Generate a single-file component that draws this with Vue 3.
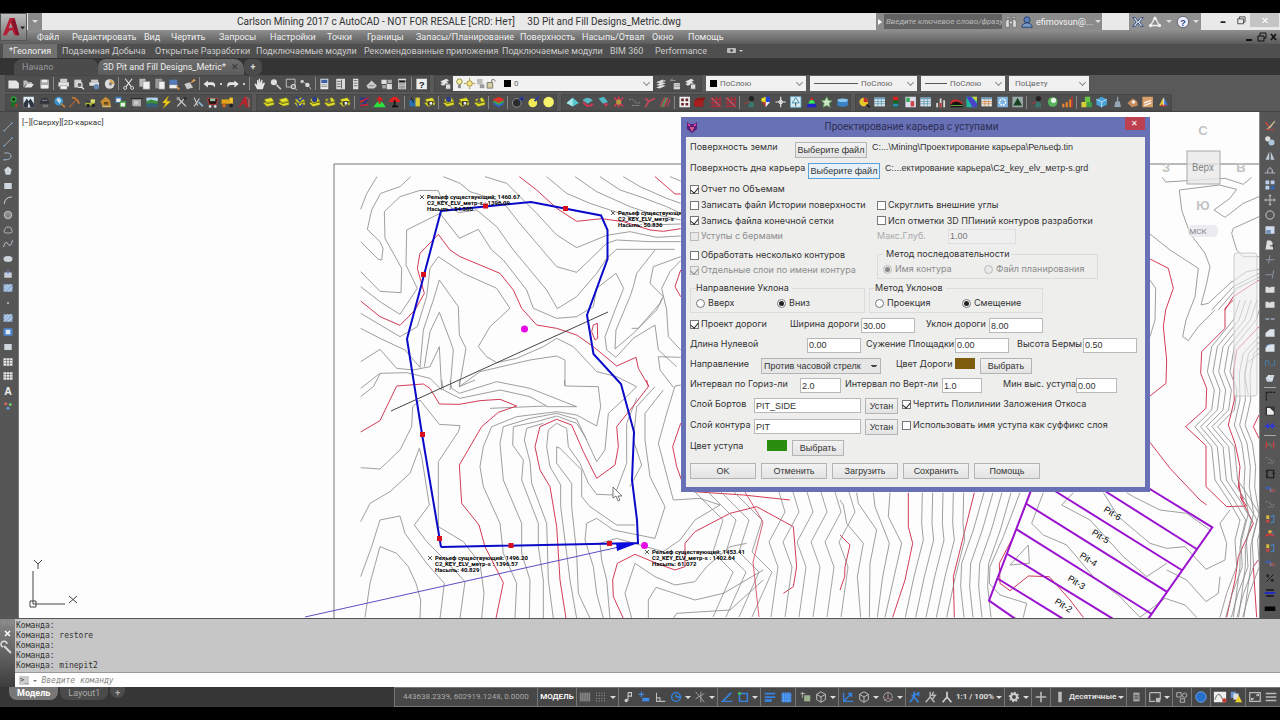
<script setup>
import { ref } from 'vue'

const menus = ['Файл', 'Редактировать', 'Вид', 'Чертить', 'Запросы', 'Настройки', 'Точки', 'Границы', 'Запасы/Планирование', 'Поверхность', 'Насыпь/Отвал', 'Окно', 'Помощь']
const ribbon = ['*Геология', 'Подземная Добыча', 'Открытые Разработки', 'Подключаемые модули', 'Рекомендованные приложения', 'Подключаемые модули', 'BIM 360', 'Performance']

const W = '#e4e4e4'
const layer = (extra) => `<path d="M3 5l8-2 3 4-8 2zM2 9l4-1 8 0 0 3-8 2z" fill="#e6e12c" stroke="#8b8a1c" stroke-width=".6"/><path d="M3 7l3 3 8-2" fill="none" stroke="#6b6b12"/>${extra}`
const table = (c) => `<path d="M2 3h12v10H2z" fill="#dfe9ef"/><path d="M2 3h12v2H2z" fill="#6aa0c4"/><path d="M2 7.500h12M2 10h12M6 5v8M10 5v8" stroke="${c}" stroke-width=".8"/>`
const person = (c) => `<circle cx="10" cy="4" r="3" fill="#222"/><path d="M6 14l2-7 5 2v5z" fill="${c}"/><path d="M2 10l5-2" stroke="#b33" />`
const hash = `<path d="M5 2v12M9 2v12M13 2v12M2 5h12M2 9h12M2 13h12" stroke="#b62b3c" stroke-width="1.200" fill="none"/><path d="M3 3l10 10" stroke="#c9868e"/>`

const icons = {
  new: `<path d="M2 4h9l3 3v6H2z" fill="${W}"/>`,
  open: `<path d="M2 12V4h4l1 2h5v2H5z" fill="#bbb"/><path d="M3 12l3-4h8l-3 4z" fill="${W}"/>`,
  save: `<path d="M3 3h10v10H3z" fill="#aaa"/><path d="M5 3h6v3H5zM4 9h8v4H4z" fill="#eee"/>`,
  print: `<path d="M4 2h8v4H4z" fill="#ccc"/><path d="M2 6h12v5H2z" fill="${W}"/><path d="M4 10h8v4H4z" fill="#f5f5f5" stroke="#777" stroke-width=".6"/>`,
  preview: `<path d="M3 3h8v9H3z" fill="#ccc"/><circle cx="9" cy="9" r="3" fill="#666" stroke="#eee" stroke-width="1.200"/><path d="M11 11l3 3" stroke="#eee" stroke-width="1.500"/>`,
  plot: `<path d="M4 3h8v3H4z" fill="#ccc"/><path d="M2 6h11v4H2z" fill="${W}"/><circle cx="10" cy="11" r="3" fill="#6888b5"/>`,
  web: `<circle cx="8" cy="8" r="5.500" fill="#ddd"/><path d="M8 3a5 5 0 0 1 5 5H8z" fill="#e0a84c"/><circle cx="9" cy="8" r="2" fill="#888"/>`,
  cut: `<path d="M4 2l7 9M12 2l-7 9" stroke="${W}" stroke-width="1.300"/><circle cx="4" cy="12.500" r="1.700" fill="none" stroke="${W}"/><circle cx="12" cy="12.500" r="1.700" fill="none" stroke="${W}"/>`,
  copy: `<path d="M2 2h7v9H2z" fill="#bbb"/><path d="M6 5h8v9H6z" fill="#eee" stroke="#777" stroke-width=".6"/>`,
  paste: `<path d="M3 2h8v11H3z" fill="#999"/><path d="M7 5h7v9H7z" fill="#eee" stroke="#666" stroke-width=".6"/>`,
  props: `<path d="M2 2h9v12H2z" fill="#eee"/><path d="M3 3h7v4H3z" fill="#3a61a8"/><path d="M3 9h7M3 11h7" stroke="#888"/>`,
  match: `<path d="M2 3h9v6H2z" fill="#567bbb"/><path d="M2 9h9v4H2z" fill="#eee"/><path d="M9 9l5 4-2 2z" fill="#d9954a"/>`,
  block: `<path d="M2 8l6-2 4 6-7 2z" fill="#ccc"/><path d="M8 8l5-6 2 2z" fill="#e4a25a"/>`,
  undo: `<path d="M1 8l5-4v2h6q3 1 2 6-1-3-4-3H6v3z" fill="${W}"/>`,
  redo: `<path d="M15 8l-5-4v2H4q-3 1-2 6 1-3 4-3h4v3z" fill="${W}"/>`,
  hand: `<path d="M5 14L2 8l1.500-.5L5 9V3.500h1.300L7 7V2h1.400L9 7l1-4 1.300.3L11 8l2-2 1 1-2.500 7z" fill="${W}"/>`,
  zoom: `<circle cx="6" cy="6" r="3.500" fill="#ddd"/><path d="M9 9l5 5" stroke="#ccc" stroke-width="2"/>`,
  zoomw: `<path d="M3 2.500h10v9H3z" fill="none" stroke="#ccc"/><circle cx="11" cy="11" r="2.500" fill="#777" stroke="#fff"/><path d="M13 13l2 2" stroke="#fff"/>`,
  zoomp: `<circle cx="4" cy="5" r="2" fill="#ccc"/><path d="M6 6l4 3" stroke="#aaa"/><circle cx="10" cy="9" r="2.500" fill="#ddd"/><path d="M12 11l2 3" stroke="#ccc"/>`,
  palette: `<path d="M3 2h10v12H3z" fill="#ddd"/><path d="M4 5h4M4 8h4M4 11h4M9 3v10" stroke="#555"/>`,
  tools: `<path d="M5 2h6v12H5z" fill="#ddd"/><path d="M6 4h4M6 7h4M6 10h4" stroke="#666"/>`,
  sheet: `<path d="M2 10l6-6 6 6-3 3H4z" fill="#ccc"/><path d="M5 10h6" stroke="#777"/>`,
  markup: `<path d="M2 3h6v5H2zM8 8h6v6H8z" fill="#ddd"/><path d="M9 3h5v4H9zM3 9h4v4H3z" fill="#aaa"/>`,
  calc: `<path d="M4 2h9v12H4z" fill="#ddd"/><path d="M5 4h7v2H5zM5 8h7M5 10.500h7M5 12.500h7" stroke="#666"/>`,
  help: `<path d="M2 2h12v12H2z" fill="#eee"/><text x="8" y="12.500" text-anchor="middle" font-size="11" font-weight="bold" font-family="Liberation Sans" fill="#222">?</text>`,
  layers: `<path d="M2 5l7-3 3 2-7 3zM2 8l7-3 3 2-7 3z" fill="${W}"/><path d="M8 8h6v6H8z" fill="#ddd" stroke="#555"/>`,
  layers2: `<path d="M3 6l7-3 4 1-7 3zM3 9l7-3 4 1-7 3zM3 12l7-3 4 1-7 3z" fill="${W}"/><path d="M10 3l4 3" stroke="#8aa7cc"/>`,
  layers3: `<path d="M6 7h7v7H6z" fill="#ddd"/><path d="M2 4h6M2 4l3-2M6 9h7M6 11h7" stroke="#999"/>`,
  lamp: `<circle cx="8" cy="5" r="3.500" fill="#2c9a35"/><circle cx="8" cy="5" r="1.500" fill="#111"/><path d="M6 8h4l2 6h-3l-1-3-1 3H4z" fill="#1f6b27"/><circle cx="11" cy="12" r="1.500" fill="#c33"/>`,
  mount: `<path d="M2 2h12v12H2z" fill="#dfe9f2"/><path d="M2 10l4-6 2 3 2-3 4 6v4H2z" fill="#2b3540"/><path d="M7 14l1-6 2 6z" fill="#eee"/>`,
  helmet: `<path d="M3 8a5 5 0 0 1 10 0l1 2H2z" fill="#30343a"/><path d="M6 11h6v3H6z" fill="#777"/><path d="M5 6h6" stroke="#99a"/>`,
  globe: `<circle cx="7" cy="7" r="5" fill="#3d91c9"/><path d="M4 5l3-2 3 3-2 4z" fill="#bfe0f2"/><path d="M10 10l4 4" stroke="#c88a3a" stroke-width="2"/>`,
  pick: `<path d="M5 3q6 0 8 7" stroke="#d07a35" stroke-width="1.800" fill="none"/><path d="M10 5L2 14" stroke="#a55f35" stroke-width="1.500"/>`,
  loader: `<path d="M2 9h10v3H2z" fill="#b2b436"/><path d="M8 5h5v4H8z" fill="#d8dc68"/><circle cx="5" cy="12" r="2" fill="#222"/><circle cx="11" cy="12" r="2" fill="#222"/><path d="M2 6l5 2" stroke="#333"/>`,
  digger: `<path d="M2 7l6-5 5 4 1 6H4z" fill="#c88b35"/><path d="M6 8h5v3H6z" fill="#6b4b20"/><path d="M4 13h10" stroke="#ddb566" stroke-width="2"/>`,
  windows: `<path d="M2 2h7v7H2z" fill="#3e78b5"/><path d="M3 4h5v4H3z" fill="#eee"/><path d="M7 7h7v7H7z" fill="#46a343"/><path d="M8 9h5v4H8z" fill="#eee"/>`,
  box: `<path d="M3 5h10v8H3z" fill="#aaa"/><path d="M1 4h14M4 13l-2 2" stroke="#222"/><path d="M5 7h5v4H5z" fill="#ccc"/>`,
  land: `<path d="M2 3h13v4H2z" fill="#b9d5ee"/><path d="M2 7l5-2 8 2v3H2z" fill="#3b8e3c"/><path d="M2 10l6-1 7 2v3H2z" fill="#34607a"/>`,
  bolt: `<path d="M10 1L3 9h4l-3 6 9-8H8z" fill="#f4d21d" stroke="#a78a12" stroke-width=".5"/>`,
  cross: `<path d="M3 13L12 3M4 4l9 9" stroke="#ccc" stroke-width="1.500"/><circle cx="12" cy="4" r="2" fill="#333"/><circle cx="4" cy="4" r="2" fill="#999"/>`,
  hammer: `<path d="M4 3l4 9M10 4l-6 9" stroke="#ccc" stroke-width="1.300"/><path d="M9 8l5 5" stroke="#8bb5d4" stroke-width="2"/>`,
  cart: `<path d="M2 4h12l-2 7H4z" fill="#2b1515" stroke="#c33c3c"/><path d="M5 4h6v3H5z" fill="#93c4a2"/><circle cx="5" cy="13" r="1.500" fill="#ddd"/><circle cx="11" cy="13" r="1.500" fill="#ddd"/>`,
  truck: `<path d="M1 5h9v5H1z" fill="#e2a51a"/><path d="M10 3h4v7h-4z" fill="#f4c327"/><circle cx="4" cy="12" r="2.200" fill="#c7671c"/><circle cx="12" cy="12" r="2.200" fill="#222"/>`,
  redA: `<path d="M2 14L9 2l2 0 2 12h-3l-1-4H6l-2 4z" fill="#b9242c"/><path d="M11 2l3 3v9" stroke="#e27777" fill="none"/>`,
  lay1: layer(''),
  lay2: layer('<path d="M3 11l5 2" stroke="#333"/>'),
  lay3: layer('<path d="M4 2l4 5 5-4M5 9l3 5 4-4" stroke="#2d3f9b" stroke-width="1.800" fill="none"/>'),
  lay4: layer('<circle cx="8" cy="5" r="3" fill="#2f3d86"/>'),
  lay5: layer('<path d="M8 2l-4 6 6 1z" fill="#555"/>'),
  lay6: layer('<path d="M6 7h6v5H6z" fill="#333"/><path d="M8 8h3v3H8z" fill="#eee"/>'),
  arrows: `<path d="M2 4h10l-8 9" stroke="#24308f" stroke-width="2" fill="none"/><path d="M3 8l10-5M3 12l9-1" stroke="#c23" stroke-width="1.800"/>`,
  domeg: `<path d="M8 1l4 5H4z" fill="#d22"/><path d="M1 14q7-14 14 0z" fill="#2ee03e"/><path d="M8 4v6" stroke="#c22" stroke-width="2"/>`,
  domer: `<path d="M1 8q7-12 14 0z" fill="#e32222"/><path d="M8 6v7M5 13h7" stroke="#111" stroke-width="2"/>`,
  mixed: `<path d="M2 6h7v7H2z" fill="#2a6fb0"/><path d="M9 3h5v10H9z" fill="#d8cc3b"/><path d="M4 3l3 6" stroke="#111"/>`,
  stack: `<path d="M1 10l7-3 7 3-7 4z" fill="#3163c4"/><path d="M1 7.500l7-3 7 3-7 4z" fill="#3fae44"/><path d="M1 5l7-3 7 3-7 4z" fill="#d8342c"/>`,
  ballD: `<circle cx="7" cy="9" r="5" fill="#2b2b2b" stroke="#999"/><path d="M9 7l5-5M10 3h4v4" stroke="#2a3ba0" stroke-width="1.500"/>`,
  ballY: `<circle cx="7" cy="9" r="5" fill="#f1ec55"/><path d="M9 7l5-5" stroke="#2a3ba0" stroke-width="2"/>`,
  ballB: `<circle cx="8" cy="8" r="6" fill="#f7f36b"/>`,
  diamond: `<path d="M1 9l7-6 7 6-7 4z" fill="#54c7cf"/><path d="M1 9l7-6v10z" fill="#a8e5e8"/>`,
  pinkA: `<path d="M2 6q6-6 12 0l-6 4z" fill="#5ab9c5"/><path d="M3 8q5 8 11 2" fill="none" stroke="#c73756" stroke-width="2.500"/>`,
  pinkB: `<path d="M2 4l6-2 5 6-6 2z" fill="#54b8c4"/><path d="M8 9l6 1-4 4z" fill="#c93b5b"/>`,
  pinkC: `<path d="M3 3l10 10M13 3L3 13M8 2v12" stroke="#cd3a55" stroke-width="2"/><circle cx="8" cy="8" r="3" fill="#b8983c"/>`,
  dots: `<path d="M2 5h4M7 7h2M9 9h5M5 12h9" stroke="#999" stroke-dasharray="2 1"/>`,
  branch: `<path d="M3 14l4-7 7-3M7 7L3 4" stroke="#c4465a" stroke-width="2" fill="none"/>`,
  stripes: `<path d="M3 13L8 3M7 14l5-11M11 13l3-8" stroke="#b84a55" stroke-width="1.500"/><path d="M5 14l5-11" stroke="#4fa85c" stroke-width="1.500"/>`,
  pane: `<path d="M2 2h12v12H2z" fill="#eee"/><path d="M4 4h3v3H4zM9 4h3v3H9zM4 9h3v3H4zM9 9h3v3H9z" fill="#6b2222"/>`,
  cube: `<path d="M2 6l4-3h9l-3 4v6H2z" fill="#8c1717"/><path d="M2 6h10v7H2z" fill="#a91f1f"/>`,
  hash,
  person: person('#39776c'),
  shield: `<path d="M8 2h5v6H8z" fill="#2347d8"/><path d="M3 4l5-2v7L3 7z" fill="#e9e025"/><path d="M8 14L4 8h4z" fill="#d52b2b"/><path d="M8 8h5l-5 6z" fill="#eee"/>`,
  plus: `<path d="M8 2v12M2 8h12" stroke="#ddd" stroke-width="1.400"/><circle cx="8" cy="8" r="2" fill="none" stroke="#fff"/>`,
  tree: `<path d="M2 2h12v12H2z" fill="#dcecf2" stroke="#6db5cf"/><path d="M8 3l4 6H4z" fill="none" stroke="#2e89a9"/><path d="M8 9v4" stroke="#333"/>`,
  rainbow: `<path d="M8 2l2 4H6z" fill="#d22"/><path d="M6 6h4l2 4H4z" fill="#3e5"/><path d="M4 10h8l2 4H2z" fill="#22c"/>`,
  star: `<path d="M8 2l2 4 4 .5-3 3 1 4.500-4-2-4 2 1-4.500-3-3L6 6z" fill="#cfe5c8" stroke="#5c9a56"/>`,
  drum: `<path d="M2 6q6-4 12 0v6q-6 3-12 0z" fill="#3a82c8"/><ellipse cx="8" cy="6" rx="6" ry="2" fill="#8cc3ec"/>`,
  pie: `<circle cx="7" cy="8" r="5" fill="#e8c52c"/><path d="M7 8V3a5 5 0 0 1 5 5z" fill="#c92a2a"/><path d="M10 11l4 3" stroke="#222" stroke-width="2"/>`,
  table: table('#4f90a8'),
  traffic: `<path d="M5 2h6v12H5z" fill="#162"/><path d="M5 2h6v4H5z" fill="#d22"/><path d="M5 10h6v3H5z" fill="#38b"/>`,
  report: `<path d="M2 2h12v12H2z" fill="#dde"/><path d="M3 3h4v5H3z" fill="#3a5"/><path d="M8 7h4v6H8z" fill="#c44"/>`,
  bars: `<path d="M4 14V9M8 14V4M12 14V6" stroke="#ddd" stroke-width="2"/><path d="M8 14V9" stroke="#c33" stroke-width="2"/>`,
  hills: `<path d="M1 8q5-7 14 1v2H1z" fill="#cf2b2b"/><path d="M1 11q6-7 14 0v3H1z" fill="#151515"/><path d="M1 12h14" stroke="#6b4"/>`,
  heat: `<path d="M2 2h12v12H2z" fill="#23b7a0"/><path d="M2 2h6l6 8v4H9z" fill="#4a43c9"/><path d="M8 2h6v5z" fill="#d6d33a"/>`,
  tableo: table('#d27c2a'),
  gearb: `<path d="M2 2h12v12H2z" fill="#7fb4e0"/><circle cx="8" cy="8" r="3.500" fill="none" stroke="#fff" stroke-width="1.500" stroke-dasharray="2 1"/>`,
  peak: `<path d="M2 2h12v12H2z" fill="#9aa"/><path d="M8 3l5 9H3z" fill="#17401d"/>`,
  clock: `<circle cx="8" cy="8" r="5.500" fill="#57b35b"/><circle cx="9" cy="6" r="3" fill="#e7f3e7"/>`,
  chart: `<path d="M3 14v-4M7 14V8M11 14V5" stroke="#e9822c" stroke-width="2.500"/><path d="M13 14V2" stroke="#c33" stroke-width="1.500"/>`,
  cubes: `<path d="M6 2h6v6H6z" fill="#69c545"/><path d="M2 8h6v6H2z" fill="#d5cf3c"/><path d="M8 8h6v6H8z" fill="#3e9e46"/>`,
  gem: `<path d="M8 2l6 3v6l-6 3-6-3V5z" fill="#4aa3d8"/><path d="M2 5l6 3 6-3M8 8v6" stroke="#cfeaf8" fill="none"/>`,
  flask: `<path d="M8 2v6M6 8h4l1 5H5z" stroke="#9ab" stroke-width="1.300" fill="#99a7b5"/>`,
  blob: `<path d="M2 9l6-5 5 3 1 5-7 2z" fill="#c98b5b"/><circle cx="9" cy="8" r="2" fill="#eee"/>`,
  tile: `<path d="M2 2h12v12H2z" fill="#dba06a"/><path d="M4 9l8-3M4 12l8-3" stroke="#fff" stroke-width="1.500"/>`,
  fan: `<path d="M8 2L3 12h5z" fill="#e8c52c"/><path d="M8 2l5 10H8z" fill="#3b7dd0"/><path d="M5 12h6" stroke="#c33" stroke-width="2"/><path d="M8 4v8" stroke="#eee"/>`,

  line: `<path d="M3 13L13 3" stroke="#bbb"/><path d="M2 12h2v2H2zM12 2h2v2h-2z" fill="#7fa8d8"/>`,
  pline: `<path d="M3 4q9-1 9 4t-8 5" stroke="#bcd" fill="none"/><path d="M2 12h3v2H2z" fill="#7fa8d8"/>`,
  poly: `<path d="M8 2l5 4-2 7H5L3 6z" fill="#cfd6df"/>`,
  rect: `<path d="M3 4h10v8H3z" fill="#cfd6df"/>`,
  arc: `<path d="M3 13Q4 4 13 4" stroke="#ccd6e2" fill="none" stroke-width="1.300"/>`,
  circle: `<circle cx="8" cy="8" r="5" fill="#888" stroke="#ddd"/>`,
  cloud: `<path d="M4 12q-3-3 0-5 1-4 5-3 4 0 4 4 2 4-3 4z" fill="none" stroke="#ccd"/>`,
  spline: `<path d="M2 12q3-10 6-4t6-5" fill="none" stroke="#ccd" stroke-width="1.200"/>`,
  ellipse: `<ellipse cx="8" cy="8" rx="6" ry="4" fill="#ccd3dc"/>`,
  insert: `<path d="M3 6h10v7H3z" fill="#ccd"/><path d="M8 2v6M5 5l3 3 3-3" stroke="#6ea0de" fill="none"/>`,
  hatch: `<path d="M2 3h12v10H2z" fill="#8fb0d8"/><path d="M3 12l9-9M3 8l5-5M8 13l6-6" stroke="#eee"/>`,
  grad: `<path d="M2 3h12v10H2z" fill="#4e86cf"/><path d="M5 5h6v6H5z" fill="#e0eaf8"/>`,
  grid: `<path d="M2 3h12v10H2z" fill="#e8e8e8"/><path d="M2 6h12M6 3v10M10 3v10M2 9.500h12" stroke="#777"/>`,
  textA: `<text x="8" y="13.500" text-anchor="middle" font-size="14" font-weight="bold" font-family="Liberation Sans" fill="#eee">A</text>`,
  point: `<path d="M7 7h2v2H7z" fill="#eee"/>`,
  colors: `<circle cx="5" cy="5" r="2" fill="#d66"/><circle cx="11" cy="6" r="2" fill="#6c6"/><circle cx="8" cy="11" r="2" fill="#69d"/>`,
  brush: `<path d="M2 3l5 6" stroke="#c54a3a" stroke-width="2"/><path d="M14 1L7 9l-4 3 5-1 7-9z" fill="#d9c89a"/><path d="M2 13h12" stroke="#d44"/>`,
  copies: `<circle cx="5" cy="5" r="3.500" fill="#ddd"/><circle cx="10" cy="10" r="4" fill="#adc6dc"/>`,
  mirror: `<path d="M7 2v11H2zM9 2v11h5z" fill="#bcc8d4"/>`,
  offset: `<path d="M1 12h4V8q3-6 6 0v4h4" fill="none" stroke="#bbc" stroke-width="1.300"/><path d="M5 12h6V9" stroke="#bbc" fill="none"/>`,
  array: `<path d="M2 2h5v5H2zM9 2h5v5H9zM2 9h5v5H2z" fill="#bcd2ef"/><path d="M9 9h5v5H9z" fill="#3465b3"/>`,
  move: `<path d="M8 1v14M1 8h14M6 3l2-2 2 2M6 13l2 2 2-2M3 6L1 8l2 2M13 6l2 2-2 2" stroke="#ddd" fill="none"/>`,
  rotate: `<circle cx="8" cy="8" r="5.500" fill="none" stroke="#ccc" stroke-width="1.300"/>`,
  scale: `<path d="M2 3h12v10H2z" fill="#cfdcec"/><path d="M3 8h6v5H3z" fill="#6f90bb"/>`,
  stretch: `<path d="M4 2h5l3 4v8H2z" fill="#ddd"/><path d="M8 9h5M11 7l2 2-2 2" stroke="#222" fill="none"/>`,
  trim: `<path d="M2 9h12M8 3L6 14" stroke="#9ab" />`,
  extend: `<path d="M2 9h9M13 3l-2 11" stroke="#9ab"/>`,
  breakI: `<path d="M2 5h12v8H2z" fill="#ddd"/><path d="M6 4h3v2H6z" fill="#555"/>`,
  join: `<path d="M2 8h5M9 8h5" stroke="#9ab" stroke-width="2"/>`,
  fillet: `<path d="M2 13V8q1-5 7-5h5v10z" fill="#dde3ea"/><path d="M2 8q1-5 7-5" stroke="#5a8bd0" fill="none"/>`,
  chamfer: `<path d="M2 13V8l6-5h6v10z" fill="#dde3ea"/>`,
  blend: `<path d="M2 12V5h4q0 7 4 6h4V4" stroke="#48b" fill="none"/>`,
  explode: `<path d="M2 8l4-4h8l-3 9H4z" fill="#c9d4e0"/><path d="M6 4l1 5 5 1" stroke="#fff" fill="none"/>`,
  corner: `<path d="M3 14V3h12" stroke="#111" stroke-width="1.500" fill="none" stroke-dasharray="3 1"/>`,
  page: `<path d="M2 2h12v12H2z" fill="#333"/><path d="M4 4h4l5 5v4H4z" fill="#eee"/>`,
  blue: `<path d="M1 8h4M15 8h-4" stroke="#2b35e0" stroke-width="2"/><path d="M4 3l4 5-4 5zM12 3L8 8l4 5z" fill="#2b35e0"/>`,
  redgreen: `<path d="M3 3v10M13 3v10M3 8h4M9 8h4" stroke="#c44" stroke-width="1.500"/><path d="M6 5l4 6" stroke="#4b6"/>`,
  chip: `<path d="M4 3h9v10H4z" fill="none" stroke="#161616" stroke-width="1.500"/><path d="M2 5h3M2 11h3M11 7h4" stroke="#161616"/>`,
  net: `<path d="M2 5h7v3H2z" fill="#3d5fb3"/><path d="M7 9h8M7 11h8" stroke="#a55" stroke-width="1.500"/><path d="M9 7v5" stroke="#69c"/>`,
  nodesA: `<path d="M3 3h4v5H3z" fill="#d9b63c"/><path d="M3 9h4v4H3z" fill="#c44"/><path d="M9 5l4-2v9l-4 1" fill="none" stroke="#48c" stroke-width="1.400"/>`,
  nodesB: `<path d="M2 11q6-5 12 0" stroke="#d33" stroke-width="2" fill="none"/><path d="M6 3h4v4H6z" fill="#d9b63c"/><path d="M12 5v5" stroke="#48c"/>`,
  pct: `<path d="M3 13L13 3" stroke="#111"/><circle cx="5" cy="5" r="2" fill="#222"/><circle cx="11" cy="11" r="2" fill="#222"/>`,
  dash: `<path d="M3 4h10M3 12h10" stroke="#141414" stroke-width="2"/><path d="M1 8h14" stroke="#2630c0" stroke-width="3"/>`,
  bar: `<path d="M1 6h14v6H1z" fill="#050505"/>`,

  sgrid: `<path d="M3 3v10M5.500 3v10M8 3v10M10.500 3v10M13 3v10" stroke="#999"/><path d="M2 3h12v10H2z" fill="#888" opacity=".5"/>`,
  ssnap: `<path d="M3 3v11M6 3v11M9 3v11M12 3v11" stroke="#bbb" stroke-dasharray="1 2"/>`,
  infer: `<path d="M8 3h4v4H8V3v9" stroke="#ccc" fill="none" stroke-width="1.200"/><circle cx="6" cy="12" r="2" fill="#ccc"/>`,
  dyn: `<path d="M2 5h6M5 2v6" stroke="#3d8bea" stroke-width="1.400"/><path d="M6 9h8v4H6z" fill="#3d8bea"/>`,
  ortho: `<path d="M4 3v10h10M4 9h4v4" stroke="#bbb" fill="none" stroke-width="1.200"/>`,
  polar: `<circle cx="8" cy="8" r="5" fill="none" stroke="#3584e4" stroke-width="1.600"/><path d="M8 8h6M8 8V5" stroke="#3584e4" stroke-width="1.600"/>`,
  iso: `<path d="M3 2l10 12M9 2v12M3 10L13 4" stroke="#aaa"/>`,
  track: `<path d="M13 3L3 13h11" stroke="#3584e4" stroke-width="1.700" fill="none"/>`,
  osnap: `<path d="M4 4h9v9H4z" stroke="#3584e4" stroke-width="1.700" fill="none"/><circle cx="4" cy="4" r="1.800" fill="#3cc14b"/>`,
  lwt: `<path d="M2 4h12M2 8h12" stroke="#3584e4" stroke-width="2"/><path d="M2 12h8" stroke="#3584e4" stroke-width="3"/>`,
  transp: `<path d="M3 3h11v11H3z" fill="#3584e4"/><path d="M5 3v11M8 3v11M11 3v11M3 6h11M3 9h11M3 12h11" stroke="#7ab0f0" stroke-dasharray="1 1"/>`,
  cycle: `<path d="M3 4h5M5 2v7" stroke="#bbb"/><path d="M7 6h7v7H7z" fill="#9db08d"/>`,
  box3: `<path d="M3 5l5-3 5 3v6l-5 3-5-3zM3 5l5 3 5-3M8 8v6" stroke="#ccc" fill="none"/>`,
  ucs: `<path d="M3 3v10h11M4 12l8-8M8 4h4v4" stroke="#3584e4" stroke-width="1.500" fill="none"/>`,
  gizmo: `<circle cx="8" cy="8" r="5" fill="none" stroke="#aaa"/><path d="M8 2v7l5 3M8 9l-4 3" stroke="#b88" fill="none"/>`,
  annoB: `<path d="M7 2v6l-5 6M7 8l5 6M4 7l8-3M12 2v5" stroke="#3584e4" stroke-width="2" fill="none"/>`,
  anno: `<path d="M7 2v6l-5 6M7 8l5 6M11 2l-2 4h4l-3 4" stroke="#bbb" stroke-width="1.600" fill="none"/>`,
  annoS: `<path d="M8 2v6l-5 6M8 8l5 6" stroke="#ccc" stroke-width="2" fill="none"/>`,
  gear: `<circle cx="8" cy="8" r="3.500" fill="none" stroke="#ccc" stroke-width="2.500"/><circle cx="8" cy="8" r="5.200" fill="none" stroke="#ccc" stroke-width="1.500" stroke-dasharray="2 2"/>`,
  add: `<path d="M8 2v12M2 8h12" stroke="#bbb" stroke-width="1.800"/>`,
  ruler: `<path d="M6 2h4v12H6z" fill="#bbb"/>`,
  quick: `<path d="M5 3h7v10H5z" fill="#aaa"/><path d="M6 6h5M6 8h5M6 10h5" stroke="#444"/>`,
  lock: `<path d="M2 3h12v8M2 3v10h6" stroke="#bbb" fill="none" stroke-width="1.300"/><path d="M9 9h5v5H9z" fill="#bbb"/>`,
  isolate: `<path d="M2 3h5v5H2z" fill="none" stroke="#bbb"/><circle cx="11" cy="6" r="2.500" fill="none" stroke="#bbb"/><path d="M6 10h5v4H6z" fill="none" stroke="#bbb"/>`,
  hw: `<circle cx="8" cy="8" r="6" fill="#2a6fc9" stroke="#6aa5ea"/>`,
  graph: `<path d="M1 2h14v12H1z" fill="#eee"/><path d="M2 11q4-10 7-4t5 4" stroke="#555" fill="none"/><circle cx="13" cy="12" r="2.500" fill="#c43a2c"/>`,
  warn: `<path d="M2 2h6v7H2z" fill="#6b94cc"/><path d="M5 4h6v7H5z" fill="#ddd"/><path d="M11 6l4 8H7z" fill="#ecd22e"/>`,
  full: `<path d="M2 3h12v10H2z" fill="none" stroke="#bbb" stroke-width="1.400"/><path d="M4 11l3-2M12 5L9 7M10 5h2v2M4 9v2h2" stroke="#ddd" fill="none"/>`,
  menu: `<path d="M2 4h12M2 8h12M2 12h12" stroke="#bbb" stroke-width="1.600"/>`,
}

const standard = 'new open save | print preview plot web | cut copy paste match block | undo . redo . | hand zoom zoomw zoomp | props palette tools sheet markup calc | help'.split(' ')
const strips = [
  { name: 'mine', items: 'lamp mount helmet globe pick loader digger windows box land bolt cross hammer cart truck redA'.split(' ') },
  { name: 'layer', items: 'lay1 lay2 lay3 lay4 lay5 lay6 | arrows domeg domer | mixed lay6 | lay4 lay6 lay5 | stack | ballD ballY ballB'.split(' ') },
  { name: 'surface', items: 'diamond pinkA pinkB pinkC dots branch stripes | pane cube hash hash | person shield plus tree rainbow star drum'.split(' ') },
  { name: 'report', items: 'pie table traffic report table bars hills heat tableo gearb peak | person clock chart | cubes gem flask blob tile fan'.split(' ') },
]
const drawTools = 'line line pline poly rect arc circle cloud spline ellipse insert hatch point hatch grad rect grid grid textA colors'.split(' ')
const editTools = 'brush copies mirror offset array move rotate scale stretch trim extend breakI breakI join chamfer fillet blend explode | corner page blue | redgreen dots chip net dots nodesA nodesB nodesA net pct dash bar'.split(' ')
const status = 'sgrid ssnap v | infer dyn ortho polar v iso v | track osnap v | lwt transp | cycle box3 v | ucs box3 v gizmo v | annoB anno annoS #1:1_/_100% v | gear v | add | ruler #Десятичные v | quick | lock v | isolate | hw | graph warn | full menu'.split(' ')

const range = (n) => Array.from({ length: n }, (_, i) => i)

const sheets = [
  {
    at: 'translate(330 150) scale(.33333)',
    gray: [
      '141,80 110,131 92,178', '242,80 210,110 152,130 125,180 112,238 150,275 159,295 155,330 145,328 92,275',
      '163,185 165,265 215,355 213,428 150,424 92,365', '163,185 210,140 270,121 325,122 335,150 385,188 440,180 500,230 550,300 650,420 682,476 740,440 800,370 830,325 860,298 1034,298',
      '330,190 230,240 228,345 262,415 210,493 150,455 92,410', '330,190 388,265 445,238 485,300 520,330 590,420 610,475 680,505 740,500 790,470 800,415 858,370 881,415 855,480 825,560 830,600 858,622 910,565 975,525 985,600 1040,650',
      '340,80 390,100 420,125 500,150 530,170 565,215 620,280 680,350 740,367 830,280 860,270 960,275 1052,275', '465,80 530,100 580,150 620,190 680,255 740,293 830,256 900,245 980,262 1052,258',
      '650,80 710,130 780,160 870,190 960,225 1052,222', '735,80 800,125 900,170 960,190 1052,210', '810,80 870,120 930,140 1010,170 1052,190', '880,80 930,110 1010,145 1052,160', '1020,80 1052,93',
      '92,490 210,560 262,530 290,440 300,355 325,320 400,370 500,415 540,475 480,530 445,590 470,620 500,638 560,625 640,590 680,565 730,590 800,665 860,680 920,710',
      '92,535 150,565 225,600 270,652 280,540 310,450 328,390 385,470 388,555 408,595 388,710', '283,650 300,545 328,487 360,570 370,600 360,720', '300,650 328,590 335,720', '92,635 150,598 200,655 250,660 300,650',
      '92,715 150,670 230,668 300,685 335,720', '388,710 450,665 600,630 680,618 705,630 705,708', '975,300 920,370 910,410 900,440 858,540 855,597 910,550 980,480 1000,440 960,400 970,350 1052,320',
      '1052,332 1020,365 995,415 1010,480 1015,560 1052,600', '905,535 925,535 990,460 995,445', '1052,622 985,620 990,660 1030,712',
    ],
    red: ['568,80 620,120 680,175 740,214 815,206 880,215 960,240 1000,244 1052,236', '975,80 1010,110 1035,132 1052,132', '92,453 150,500 210,526 255,480 283,430 262,355 270,310 325,253 360,300 390,320 450,345 510,370 550,420 575,475 620,525 680,535 740,555 790,590 860,648 918,622 925,655 957,710', '1052,360 1035,410 1052,440', '790,525 802,520 803,565 795,570 785,545 790,525'],
  },
  {
    at: 'translate(330 380) scale(.33333)',
    gray: [
      '92,50 130,20 150,-18', '92,263 150,267 210,210 245,140 248,80 270,60 328,133 390,137 385,155 325,245 325,440 400,485 450,550 462,640 455,715', '92,425 120,370 180,335 240,280 268,205 275,230 298,375 253,435 290,485 345,540 405,605 390,715',
      '92,590 125,500 150,420 210,408 225,460 290,550 343,610 330,715', '105,712 120,610 150,500 200,520 235,560 258,610 272,660 270,715',
      '703,0 705,18 805,20 812,80 800,138 740,105 680,95 560,110 485,140 460,200 450,260 460,320 510,430 520,520 560,610 555,715',
      '920,20 890,50 835,100 825,210 800,245 765,170 740,130 680,108 620,125 550,140 548,195 580,240 575,300 625,430 625,500 640,600 640,715',
      '770,180 740,118 680,100 600,115 520,140 510,190 520,300 575,430 575,520 600,600 598,715', '583,180 590,145 640,130', '583,180 600,245 605,310 650,430 655,600 670,715',
      '920,55 890,130 890,250 860,330 850,345 800,343 775,310 750,250 715,200 710,145 680,130 655,150 650,200 660,260 692,315 692,380 710,520 720,600 740,715',
      '975,20 920,80 910,180 935,255 900,320', '915,435 860,435 780,380 755,350 755,270 690,205 680,200 680,250 725,310 725,380 740,520 745,640 780,715', '1000,30 945,100 945,180 960,290 1005,380 975,475 850,450 800,415 770,430 765,480 790,560 800,640 820,715',
      '1052,15 1035,18 1010,100 985,190 1030,360 1110,355 1170,375 1095,420 1050,480 1000,515 930,495 860,475 810,490 815,540 830,600 840,715', '905,715 885,640 915,550 975,590 1035,615 1095,605 1130,560 1200,500 1250,490', '955,715 955,660 978,622 1095,660 1180,640 1300,570', '1030,715 1040,700 1200,690 1300,600',
      '335,0 340,30 390,55 510,30 600,50 650,78 480,85', '360,0 365,25 388,40 500,5 600,25 740,80 650,80', '388,0 388,20 435,0',
    ],
    red: ['92,156 150,122 200,18 280,12 300,25 328,72 388,73 450,62 510,58 560,78 505,97 455,140 388,255 395,370 447,435 465,500 520,608 498,715', '950,0 955,20 920,65 860,140 865,200 855,255 800,295 760,215 725,135 680,118 630,140 615,200 630,270 660,320 680,440 690,600 708,715', '1062,120 1052,130 1028,200 1040,260 1062,320', '1090,335 1240,345 1380,360', '880,715 850,650 848,600 862,550 915,523 980,550 1035,570 1065,560 1065,490 1095,455 1200,400 1280,380 1390,440 1400,560 1390,620 1360,640'],
  },
  {
    at: 'translate(900 110) scale(.33333)',
    gray: ['787,202 797,216 975,205 1030,223 1055,202', '838,240 958,225 1010,238 990,265 942,300 975,322 1030,280 1077,260', '838,240 845,300 870,370 915,430 930,470 920,520 903,585 925,580 990,520 1040,485 1077,478', '1077,320 1000,355 995,370 1010,420 1030,440 1077,440', '750,372 810,420 895,475 885,560 858,630 848,680 865,692 895,650 945,600', '750,510 767,535 765,630 750,680', '935,600 1000,530 1077,490', '955,600 1010,535 1077,502'],
    red: ['750,447 805,475 820,535 797,600 790,650 800,750 798,820 750,858', '975,600 1000,560 1077,510'],
  },
  {
    at: 'translate(900 300) scale(.33333)',
    gray: ['1077,160 1040,190 1035,230 1045,285'],
    red: ['1000,0 975,25 975,85 905,155 902,220 920,265 918,325 857,380 918,437 918,560 980,620 1040,618 1020,590', '1077,80 1010,150 1000,220 1003,300 985,375 1005,430 1020,500 1015,560 1030,600', '750,427 810,505 900,600 920,615', '1077,345 1060,380 1077,415'],
  },
  {
    at: 'translate(840 480) scale(.33333)',
    gray: [
      '0,60 10,75 20,130 70,190 52,290 62,412', '50,38 55,70 110,150 90,250 88,412', '100,38 105,80 148,190 128,290 112,412', '150,38 145,110 185,190 160,300 135,412', '540,38 490,170 450,260 448,310 480,345 560,370 550,412',
      '610,38 575,130 610,165 680,195 760,290 840,350 900,412', '700,38 665,75 750,120 850,230 920,290 980,250', '790,38 835,110 930,190 980,205 1035,200 1098,268 1155,240 1160,190 1140,130 1170,90', '860,38 880,50 960,90 1040,100 1110,150', '510,255 565,195 568,250 510,255', '900,412 975,355 1035,375 1070,412', '980,270 1040,300 1098,365 1135,340 1140,290',
    ],
    red: ['0,165 30,195 15,260 14,290 0,330', '205,38 205,140 218,190 195,300 158,412', '403,38 370,170 340,290 343,412', '572,38 520,170 478,250 480,310 510,332 565,288 628,290 690,360 730,412', '1195,0 1205,60 1240,130 1195,230 1185,300 1160,412', '1255,240 1240,260 1250,412'],
  },
]

const notes = [
  { x: 427, y: 199, rows: ['Рельеф существующий: 1460.67', 'C2_KEY_ELV_метр-s : 1396.09', 'Насыпь : 54.580'] },
  { x: 618, y: 215, rows: ['Рельеф существующий', 'C2_KEY_ELV_метр-s', 'Насыпь: 50.836'] },
  { x: 435, y: 560, rows: ['Рельеф существующий: 1496.20', 'C2_KEY_ELV_метр-s : 1396.57', 'Насыпь: 40.829'] },
  { x: 652, y: 554, rows: ['Рельеф существующий: 1453.41', 'C2_KEY_ELV_метр-s : 1402.64', 'Насыпь: 61.072'] },
]
const grips = [[485.500, 206], [565.500, 208.500], [423.500, 274.500], [422.500, 434.500], [439.500, 538.500], [511, 545.500], [609.500, 543.500]]
const pits = [['Pit-6', 1103, 511], ['Pit-5', 1091, 534], ['Pit-4', 1079, 557], ['Pit-3', 1067, 580], ['Pit-2', 1054, 603]]
const history = ['Команда:', 'Команда: restore', 'Команда:', 'Команда:', 'Команда: minepit2']

const form = ref({
  report: true, hist: false, round: false, grid: true, marks: false, berms: false, many: false, split: true,
  seq: 'name', dir: 'down', method: 'offset', road: true, poly: true, suffix: false,
  depth: '1.00', width: '30.00', slope: '8.00', zero: '0.00', narrow: '0.00', berm: '0.50',
  horiz: '2.0', vert: '1.0', minh: '0.00', side: 'PIT_SIDE', pit: 'PIT', turn: 'ccw',
})
</script>

<template>
  <div class="screen">
    <header class="title">
      <button class="logo" aria-label="Меню приложения">
        <svg viewBox="0 0 26 26"><path d="M2 21L9 3h5l5 18h-5l-2-5q-4-1-6 5zM8 14q2-1 4-1l-2-5z" fill="#b51f33" /><path d="M14 3l5 18h-3L11 7z" fill="#85142a" /><path d="M20 12h5l-2.500 3z" fill="#222" /></svg>
      </button>
      <button class="quick" aria-label="Быстрый доступ"><i class="down"></i></button>
      <h1>Carlson Mining 2017 c AutoCAD - NOT FOR RESALE [CRD: Нет] &nbsp; &nbsp; 3D Pit and Fill Designs_Metric.dwg</h1>
      <div class="info">
        <i class="play"></i>
        <input class="search" aria-label="Поиск" placeholder="Введите ключевое слово/фразу" />
        <svg class="i16" viewBox="0 0 16 16"><path d="M3 5h3v9H2V8zM10 5h3l1 3v6h-4zM6 7h4v3H6zM3 2h3v2H3zM10 2h3v2h-3z" fill="#ddd" stroke="#555" stroke-width=".6" /></svg>
        <svg class="i16" viewBox="0 0 16 16"><circle cx="8" cy="5.500" r="3.500" fill="#5d80b8" stroke="#203a70" /><path d="M2 14q1-5 6-5t6 5z" fill="#7898c8" stroke="#203a70" /></svg>
        <span>efimovsun@...</span><i class="down"></i>
      </div>
      <div class="apps">
        <svg class="i16" viewBox="0 0 16 16"><path d="M2 3h3l3 4 3-4h3l-4 5 4 5h-3L8 9l-3 4H2l4-5z" fill="#d7deea" stroke="#2d4778" /></svg>
        <svg class="i16" viewBox="0 0 16 16"><path d="M8 3l5 9H3z" fill="none" stroke="#eee" stroke-width="1.500" /><circle cx="8" cy="4" r="2" fill="#eee" /><circle cx="3" cy="12" r="2" fill="#eee" /><circle cx="13" cy="12" r="2" fill="#eee" /></svg>
        <i class="down"></i>
        <svg class="i16" viewBox="0 0 16 16"><circle cx="8" cy="8" r="6.500" fill="#eef" stroke="#556" /><text x="8" y="12" text-anchor="middle" class="q">?</text></svg>
        <i class="down"></i>
      </div>
      <div class="wm">
        <button aria-label="Свернуть"><svg viewBox="0 0 16 16"><path d="M5 10h6" stroke="#111" stroke-width="2" /></svg></button>
        <button aria-label="Восстановить"><svg viewBox="0 0 16 16"><path d="M4 6h7v6H4zM6 6V3.500h7V10h-2" fill="none" stroke="#333" /></svg></button>
        <button class="x" aria-label="Закрыть"><svg viewBox="0 0 16 16"><path d="M5 5l6 6M11 5l-6 6" stroke="#fff" stroke-width="1.500" /></svg></button>
      </div>
    </header>

    <nav class="menu">
      <a v-for="m in menus" :key="m" href="#">{{ m }}</a>
      <svg class="mdi" viewBox="0 0 36 14"><path d="M2 10h6" stroke="#111" stroke-width="2" /><path d="M14 6h6v5h-6zM16 6V3h6v5h-2" fill="none" stroke="#111" /><path d="M27 4l5 6M32 4l-5 6" stroke="#111" stroke-width="1.600" /></svg>
    </nav>

    <nav class="ribbon">
      <a v-for="(r, i) in ribbon" :key="i" href="#" :class="{ on: i === 0 }">{{ r }}</a>
      <svg class="cam" viewBox="0 0 20 10"><rect x="2" y="2" width="9" height="5" rx="1" fill="#bbb" /><circle cx="6.500" cy="4.500" r="1.300" fill="#444" /><path d="M14 4h4l-2 2z" fill="#ccc" /></svg>
    </nav>

    <nav class="files">
      <button class="home">Начало</button>
      <button class="doc">3D Pit and Fill Designs_Metric* <span>✕</span></button>
      <button class="plus" aria-label="Новый чертёж">+</button>
    </nav>

    <section class="bars">
      <div class="bar">
        <div class="strip std">
          <template v-for="(n, i) in standard" :key="i">
            <i v-if="n === '|'" class="sep"></i><i v-else-if="n === '.'" class="dot"></i>
            <svg v-else viewBox="0 0 16 16" v-html="icons[n]"></svg>
          </template>
        </div>
        <div class="strip lyr">
          <svg viewBox="0 0 16 16" v-html="icons.layers"></svg>
          <button class="combo c1">
            <svg viewBox="0 0 52 14"><circle cx="7" cy="5" r="3" fill="#f5f0a0" stroke="#8a8540" /><path d="M5.500 8h3v4h-3z" fill="#888" /><circle cx="18" cy="7" r="3" fill="#f2e28a" stroke="#a08a30" /><path d="M18 1v2M18 11v2M12 7h2M22 7h2" stroke="#a08a30" /><path d="M26 2h6v6h-6z" fill="#bbb" /><path d="M29 8h5v4h-5z" fill="#999" /><path d="M37 6h6v6h-6z" fill="#d8cfa0" stroke="#776" /><path d="M42 6V3q3-2 4 2" fill="none" stroke="#776" /></svg>
            <i class="blk"></i>0<i class="chev"></i>
          </button>
          <svg viewBox="0 0 16 16" v-html="icons.layers2"></svg><svg viewBox="0 0 16 16" v-html="icons.layers3"></svg><svg viewBox="0 0 16 16" v-html="icons.layers"></svg>
        </div>
        <button class="combo c2"><i class="blk"></i>ПоСлою<i class="chev"></i></button>
        <button class="combo c3"><i class="ln"></i>ПоСлою<i class="chev"></i></button>
        <button class="combo c4"><i class="ln"></i>ПоСлою<i class="chev"></i></button>
        <button class="combo c5">ПоЦвету<i class="chev"></i></button>
      </div>
      <div class="bar">
        <div v-for="s in strips" :key="s.name" class="strip" :class="s.name">
          <template v-for="(n, i) in s.items" :key="i"><i v-if="n === '|'" class="sep"></i><svg v-else viewBox="0 0 16 16" v-html="icons[n]"></svg></template>
        </div>
      </div>
    </section>

    <main class="work">
      <aside class="tools left"><svg v-for="(n, i) in drawTools" :key="i" viewBox="0 0 16 16" v-html="icons[n]"></svg></aside>

      <svg class="map" viewBox="19 112 1240 506" preserveAspectRatio="xMinYMin slice">
        <path d="M334 618V164H1259" class="frame" />
        <g v-for="s in sheets" :key="s.at" :transform="s.at">
          <polyline v-for="p in s.gray" :key="p" :points="p" class="iso" />
          <polyline v-for="p in s.red" :key="p" :points="p" class="iso red" />
        </g>
        <g transform="translate(900 300) scale(.33333)">
          <polyline v-for="k in range(5)" :key="k" :transform="`translate(${k * 17} 0)`" points="1020,0 1000,60 935,140 922,215 943,270 935,330 885,380 935,440 945,540 985,600 1020,660 1005,720 1010,800 980,880 960,952" class="iso" />
          <polyline v-for="k in range(3)" :key="'b' + k" :transform="`translate(${k * 16} 0)`" points="1077,110 1030,160 1018,220 1020,300 1003,375 1025,430 1035,500 1032,560 1045,640 1020,740 1020,800 1000,952" class="iso" />
        </g>
        <g transform="translate(840 480) scale(.33333)">
          <polyline v-for="k in range(5)" :key="k" :transform="`translate(${k * 31} 0)`" points="247,38 245,130 250,180 222,290 196,412" class="iso" />
          <polyline v-for="k in range(4)" :key="'c' + k" :transform="`translate(${k * 27} 0)`" points="432,38 400,150 365,250 362,320 372,412" class="iso" />
        </g>
        <g transform="translate(683 492)">
          <polyline v-for="k in range(6)" :key="k" :transform="`translate(${k * 14} 0)`" points="96,0 102,20 86,50 95,75 88,125" class="iso thin" />
          <polyline v-for="k in range(4)" :key="'d' + k" :transform="`translate(${k * 13} 0)`" points="12,0 40,28 30,60 50,80 30,125" class="iso thin" />
          <polyline points="62,0 80,30 70,70 76,125" class="iso thin red" />
        </g>
        <path d="M391 411L608 312" class="frame dark" />
        <g transform="translate(840 480) scale(.33333)" class="pit">
          <path d="M578 18L447 362 525 416M560 72L980 335M530 148L935 402M502 222L818 416M475 297L668 416M640 30L1025 270M790 30L1070 207M915 18L1117 142 925 416" />
        </g>
        <g class="pname"><text v-for="p in pits" :key="p[0]" :transform="`translate(${p[1]} ${p[2]}) rotate(32)`">{{ p[0] }}</text></g>
        <path d="M305 617L637 543" stroke="#5a50c0" stroke-width="1" fill="none" />
        <path d="M441 547L422 434 407 339 441 211 531 202 601 215.500 607.500 230V259L587 315 593.500 354 621 384 634 432 632 480 637 520 638 543 441 547" class="road" />
        <path d="M616 543l22 0-21 8z" fill="#0a0adf" />
        <rect v-for="g in grips" :key="g[0]" :x="g[0] - 2.500" :y="g[1] - 2.500" width="5" height="5" fill="#d80f1c" />
        <circle cx="524.500" cy="329" r="3.500" fill="#e60ae6" /><circle cx="644.500" cy="545.500" r="3.500" fill="#e60ae6" />
        <g v-for="n in notes" :key="n.x" class="note">
          <path :d="`M${n.x - 7} ${n.y - 4}l4 4m0-4l-4 4`" stroke="#333" stroke-width=".8" />
          <text v-for="(r, i) in n.rows" :key="r" :x="n.x" :y="n.y + i * 6">{{ r }}</text>
        </g>
        <path d="M613 487v11l3-2 2 5 2-1-2-4h4z" fill="#fff" stroke="#555" stroke-width=".8" />
        <text x="22" y="125" class="view">[−][Сверху][2D-каркас]</text>
        <path d="M33 571V604H65M30 601h6v6h-6zM34 560l4 4 4-4M38 564v5M69 596l8 7M77 596l-8 7" class="ucs" />
        <g class="cube">
          <rect x="1187" y="151" width="33" height="33" />
          <text x="1203" y="135" class="big">С</text><text x="1166" y="172" class="big">З</text><text x="1241" y="172" class="big">В</text><text x="1203" y="210" class="big">Ю</text>
          <text x="1203" y="171" class="face">Верх</text>
          <rect x="1188" y="225" width="30" height="12" rx="5" class="pill" /><text x="1198" y="234" class="msk">МСК</text>
          <rect x="1234" y="253" width="23" height="143" rx="3" class="nav" />
        </g>
      </svg>

      <form class="dialog" @submit.prevent>
        <div class="cap">
          <svg viewBox="0 0 12 12"><path d="M1 1l3 2h4l3-2v7l-5 4-5-4z" fill="#5a1a78" /><path d="M2 3l2 2M10 3L8 5" stroke="#f050b0" stroke-width="1.500" /><path d="M4 7h4M5 9h2" stroke="#f0708c" stroke-width="1.500" /></svg>
          <h2>Проектирование карьера с уступами</h2>
          <button type="button" class="close" aria-label="Закрыть">✕</button>
        </div>
        <div class="body">
          <div class="row r21 f1"><label for="b1">Поверхность земли</label><button id="b1" type="button">Выберите файл</button><output>C:...\Mining\Проектирование карьера\Рельеф.tin</output></div>
          <div class="row r21 f2"><label for="b2">Поверхность дна карьера</label><button id="b2" type="button" class="focus">Выберите файл</button><output>C:...ектирование карьера\C2_key_elv_метр-s.grd</output></div>
          <div class="row r16 two"><label class="ck"><input v-model="form.report" type="checkbox" />Отчет по Объемам</label></div>
          <div class="row r16 two"><label class="ck"><input v-model="form.hist" type="checkbox" />Записать файл Истории поверхности</label><label class="ck"><input v-model="form.round" type="checkbox" />Скруглить внешние углы</label></div>
          <div class="row r15 two"><label class="ck"><input v-model="form.grid" type="checkbox" />Запись файла конечной сетки</label><label class="ck"><input v-model="form.marks" type="checkbox" />Исп отметки 3D ППиний контуров разработки</label></div>
          <div class="row r16 depth"><label class="ck off"><input v-model="form.berms" type="checkbox" disabled />Уступы с бермами</label><label for="dp" class="off light">Макс.Глуб.</label><input id="dp" v-model="form.depth" type="text" disabled /></div>
          <div class="row many two">
            <div>
              <label class="ck"><input v-model="form.many" type="checkbox" />Обработать несколько контуров</label>
              <label class="ck off"><input v-model="form.split" type="checkbox" disabled />Отдельные слои по имени контура</label>
            </div>
            <fieldset class="seq"><legend>Метод последовательности</legend>
              <label class="ck off"><input v-model="form.seq" type="radio" name="seq" value="name" disabled />Имя контура</label><label class="ck off"><input v-model="form.seq" type="radio" name="seq" value="file" disabled />Файл планирования</label>
            </fieldset>
          </div>
          <div class="row pair">
            <fieldset class="dir"><legend>Направление Уклона</legend>
              <label class="ck"><input v-model="form.dir" type="radio" name="dir" value="up" />Вверх</label><label class="ck"><input v-model="form.dir" type="radio" name="dir" value="down" />Вниз</label>
            </fieldset>
            <fieldset class="met"><legend>Метод Уклонов</legend>
              <label class="ck"><input v-model="form.method" type="radio" name="met" value="proj" />Проекция</label><label class="ck"><input v-model="form.method" type="radio" name="met" value="offset" />Смещение</label>
            </fieldset>
          </div>
          <div class="row road-row"><label class="ck up"><input v-model="form.road" type="checkbox" />Проект дороги</label><label for="w">Ширина дороги</label><input id="w" v-model="form.width" type="text" /><label for="sl">Уклон дороги</label><input id="sl" v-model="form.slope" type="text" /></div>
          <div class="row zero"><label for="z">Длина Нулевой</label><input id="z" v-model="form.zero" type="text" /><label for="nr">Сужение Площадки</label><input id="nr" v-model="form.narrow" type="text" /><label for="bm">Высота Бермы</label><input id="bm" v-model="form.berm" type="text" /></div>
          <div class="row r21 turn"><label for="tn">Направление</label><select id="tn" v-model="form.turn"><option value="ccw">Против часовой стрелк</option><option value="cw">По часовой стрелке</option></select><label for="cr">Цвет Дороги</label><i class="sw brown"></i><button id="cr" type="button">Выбрать</button></div>
          <div class="row step"><label for="h">Интервал по Гориз-ли</label><input id="h" v-model="form.horiz" type="text" /><label for="v">Интервал по Верт-ли</label><input id="v" v-model="form.vert" type="text" /><label for="mh">Мин выс. уступа</label><input id="mh" v-model="form.minh" type="text" /></div>
          <div class="row r21 lay"><label for="ls">Слой Бортов</label><input id="ls" v-model="form.side" type="text" /><button type="button">Устан</button><label class="ck up"><input v-model="form.poly" type="checkbox" />Чертить Полилинии Заложения Откоса</label></div>
          <div class="row r21 lay"><label for="lp">Слой контура</label><input id="lp" v-model="form.pit" type="text" /><button type="button">Устан</button><label class="ck up"><input v-model="form.suffix" type="checkbox" />Использовать имя уступа как суффикс слоя</label></div>
          <div class="row r21 bench"><label for="cb">Цвет уступа</label><i class="sw green"></i><button id="cb" type="button">Выбрать</button></div>
          <div class="row acts"><button v-for="b in ['OK', 'Отменить', 'Загрузить', 'Сохранить', 'Помощь']" :key="b" type="button">{{ b }}</button></div>
        </div>
      </form>

      <aside class="tools right"><template v-for="(n, i) in editTools" :key="i"><hr v-if="n === '|'" /><svg v-else viewBox="0 0 16 16" v-html="icons[n]"></svg></template></aside>
    </main>

    <section class="cmd">
      <div class="side">
        <svg viewBox="0 0 14 40"><path d="M2 3h11M2 5h11" stroke="#999" stroke-dasharray="1 1" /><path d="M5 12l5 5M10 12l-5 5" stroke="#fff" stroke-width="1.500" /><path d="M4 27l7 7" stroke="#ddd" stroke-width="2" /><path d="M3 28a3 3 0 1 1 4-3" stroke="#ddd" stroke-width="1.500" fill="none" /></svg>
      </div>
      <div class="log"><p v-for="(h, i) in history" :key="i">{{ h }}</p></div>
      <div class="entry"><i class="prompt">&gt;_</i><i class="down g"></i><input type="text" aria-label="Команда" placeholder="Введите команду" /></div>
    </section>

    <footer class="status">
      <button class="tab on">Модель</button><button class="tab">Layout1</button><button class="tab add">+</button>
      <div class="sbar">
        <span class="coord">443638.2339, 602919.1248, 0.0000</span>
        <button class="model">МОДЕЛЬ</button>
        <div class="sicons">
          <template v-for="(n, i) in status" :key="i">
            <i v-if="n === '|'" class="vs"></i><i v-else-if="n === 'v'" class="down"></i>
            <span v-else-if="n[0] === '#'">{{ n.slice(1).replace(/_/g, ' ') }}</span>
            <svg v-else viewBox="0 0 16 16" v-html="icons[n]"></svg>
          </template>
        </div>
      </div>
    </footer>
  </div>
</template>

<style>
html, body { margin: 0; background: #000; }
</style>
<style scoped>
* { box-sizing: border-box; }
.screen { min-height: 100vh; padding: 13px 0; background: #000; display: flex; flex-direction: column; font: 9px/12px Roboto, "Noto Sans", sans-serif; color: #ddd; overflow: hidden; }
button, input, select { font: inherit; color: inherit; margin: 0; padding: 0; border: 0; background: none; border-radius: 0; min-width: 0; }
a { color: inherit; text-decoration: none; }
.down { width: 0; height: 0; flex: none; border: 3px solid transparent; border-top-color: #ddd; border-bottom: 0; }
.i16 { width: 14px; height: 14px; flex: none; }

.title { height: 17px; background: #e9e9e9; display: flex; position: relative; color: #333; align-items: stretch; }
.logo { position: absolute; left: 0; top: 0; width: 27px; height: 28px; background: linear-gradient(#bdbdbd, #777); border: 1px solid #555; z-index: 2; }
.logo svg { display: block; width: 25px; height: 25px; }
.quick { margin-left: 28px; width: 14px; background: #8a8a8a; display: grid; place-items: center; }
.title h1 { font: 10px/17px Roboto, sans-serif; margin: 0; flex: 1; text-align: center; color: #333; white-space: nowrap; }
.info { width: 226px; background: #8b8b8b; color: #f4f4f4; display: flex; align-items: center; gap: 2px; padding-right: 4px; }
.info span { flex: 1; white-space: nowrap; }
.play { width: 8px; height: 0; border: 3px solid transparent; border-left: 4px solid #fff; border-right: 0; margin-left: 2px; }
.search { flex: 0 0 118px; height: 15px; background: #626262; font: italic 8px Roboto, sans-serif; padding-left: 2px; }
.search::placeholder { color: #bbb; }
.apps { margin-left: 27px; width: 72px; background: #909090; display: flex; align-items: center; justify-content: space-around; }
.q { font: bold 11px "Liberation Sans", sans-serif; fill: #2c4a8a; }
.wm { width: 79px; display: flex; justify-content: space-between; padding: 0 1px 3px 14px; }
.wm button { width: 16px; }
.wm svg { display: block; width: 14px; height: 13px; margin: auto; }
.wm .x { width: 29px; background: #c4c4c4; }

.menu { height: 14px; background: linear-gradient(#8f8f8f, #5b5b5b); display: grid; grid-template-columns: 35px 72px 27px 48px 51px 57px 40px 49px 104px 62px 70px 36px 1fr auto; padding-left: 37px; line-height: 14px; color: #eee; white-space: nowrap; }
.mdi { width: 36px; height: 14px; }
.ribbon { height: 14px; background: #4f4f4f; display: grid; grid-template-columns: 53px 93px 101px 108px 138px 108px 45px 70px 1fr; padding-left: 9px; line-height: 14px; color: #ccc; white-space: nowrap; }
.ribbon .on { background: #707070; margin-left: -6px; margin-right: 5px; padding-left: 6px; color: #eee; }
.cam { width: 20px; height: 10px; margin-top: 2px; }
.files { height: 17px; background: #343434; display: flex; padding: 1px 0 0 14px; line-height: 15px; align-items: stretch; }
.files button { text-align: left; white-space: nowrap; }
.home { width: 84px; background: #4b4b4b; color: #999; padding-left: 8px; border-radius: 8px 8px 0 0; }
.doc { width: 146px; background: linear-gradient(#6e6e6e, #5c5c5c); color: #eee; padding-left: 5px; border-radius: 8px 10px 0 0; }
.doc span { color: #333; margin-left: 3px; }
.files .plus { width: 18px; background: #4b4b4b; text-align: center; border-radius: 6px; font-weight: bold; }

.bars { height: 37px; background: #595959; padding: 0 5px; display: flex; flex-direction: column; gap: 1px; border-bottom: 1px solid #444; }
.bar { height: 18px; display: flex; align-items: center; gap: 4px; }
.strip { display: flex; align-items: center; height: 17px; background: #4e4e4e; border: 1px solid #474747; }
.strip > svg { flex: 1 1 0; min-width: 0; height: 14px; }
.sep { flex: 0 0 3px; height: 13px; border-left: 1px solid #888; margin-left: 1px; }
.dot { flex: 0 0 8px; height: 2px; background: radial-gradient(circle, #ccc 1px, transparent 1px); }
.std { width: 425px; }
.lyr { width: 268px; padding-left: 3px; }
.lyr > svg { flex: 0 0 15px; }
.mine { width: 247px; }
.layer { width: 301px; padding-left: 4px; }
.surface { width: 290px; padding-left: 3px; }
.report { width: 317px; padding-left: 1px; }
.combo { height: 15px; background: #f1f1f1; color: #666; display: flex; align-items: center; gap: 3px; padding: 0 4px; font-size: 8px; }
.combo > svg { width: 48px; height: 13px; }
.blk { width: 7px; height: 7px; background: #000; flex: none; }
.ln { flex: 0 0 44px; height: 1px; background: #555; }
.c4 .ln { flex-basis: 22px; }
.chev { margin-left: auto; width: 5px; height: 5px; border: solid #888; border-width: 0 1px 1px 0; transform: rotate(45deg); margin-bottom: 3px; }
.c1 { width: 200px; padding-left: 0; } .c2 { width: 100px; } .c3 { width: 107px; } .c4 { width: 84px; } .c5 { width: 80px; padding-left: 6px; }

.work { flex: 1; min-height: 0; position: relative; display: grid; grid-template-columns: 19px 1fr 21px; background: #fdfdfd; overflow: hidden; }
.tools { background: #565656; display: flex; flex-direction: column; justify-content: space-between; z-index: 1; }
.tools svg { width: 12px; height: 12px; flex: none; }
.left { padding: 9px 0 206px 2px; border-right: 1px solid #777; }
.right { grid-column: 3; padding: 8px 4px 4px; border-left: 1px solid #888; }
.right hr { width: 12px; margin: 0; border: 0; border-top: 1px solid #aaa; }
.map { display: block; position: absolute; left: 19px; top: 0; width: calc(100% - 40px); height: 100%; background: #fdfdfd; }
.frame { fill: none; stroke: #777; stroke-width: 1; }
.dark { stroke: #444; }
.iso { fill: none; stroke: #8c8c8c; stroke-width: 2.500; }
.red { stroke: #d23a55; stroke-width: 3; }
.thin { stroke-width: .8; }
.pit { fill: none; stroke: #9a12cf; stroke-width: 6; }
.pname { font: 9px "Liberation Sans", sans-serif; fill: #000; }
.road { fill: none; stroke: #0a0ac8; stroke-width: 2; }
.note { font: bold 6px Roboto, sans-serif; fill: #000; }
.view { font: 8px Roboto, sans-serif; fill: #333; }
.ucs { fill: none; stroke: #444; stroke-width: 1; }
.cube { text-anchor: middle; fill: #bbb; }
.cube rect { fill: #e8e8e8; stroke: #aaa; stroke-width: 1; fill-opacity: .8; }
.cube .pill { stroke: none; fill: #e6e6ee; }
.cube .nav { fill: #eee; stroke: #ccc; fill-opacity: .6; }
.big { font: bold 13px "Liberation Sans", sans-serif; fill: #c4c4c4; }
.face { font: 10px Roboto, sans-serif; fill: #888; }
.msk { font: 8px Roboto, sans-serif; fill: #888; }

.dialog { position: absolute; left: 681px; top: 5px; width: 469px; border: solid #6971b6; border-width: 0 5px 5px; background: #eeeeed; z-index: 2; font: 9px/12px "Liberation Sans", sans-serif; color: #333; }
.cap { height: 20px; background: #6971b6; display: flex; align-items: center; justify-content: space-between; }
.cap svg { width: 12px; height: 12px; }
.cap h2 { margin: 0; font: 10px/20px Roboto, sans-serif; color: #2c2f52; }
.close { width: 20px; height: 13px; background: #bc4050; color: #fff; font-size: 8px; line-height: 12px; align-self: flex-start; }
.body { padding: 2px 4px 8px; }
.row { display: grid; align-items: center; white-space: nowrap; }
.row label, legend { font-family: Inter, "Liberation Sans", sans-serif; }
.r15 { height: 15px; } .r16 { height: 16px; } .r21 { height: 21px; }
.row > label:not(.ck), .ck.up { padding-bottom: 3px; }
.f1 > label:not(.ck), .f2 > label:not(.ck), .row > output { padding-bottom: 6px; }
.depth > label:not(.ck) { padding-bottom: 0; }
.f1 { grid-template-columns: 105px 72px 1fr; } .f1 output, .f2 output { padding-left: 5px; }
.f2 { grid-template-columns: 118px 72px 1fr; }
.row button, .dialog select { height: 16px; border: 1px solid #b4b4b4; background: linear-gradient(#f2f2f2, #e3e3e3); text-align: center; line-height: 14px; }
.row .focus { border-color: #5a9fd8; background: #e9f1f8; }
.two { grid-template-columns: 187px 1fr; }
.ck { display: flex; align-items: center; gap: 2px; }
.off { color: #8c8c8c; } .light { color: #aaa; }
input[type=checkbox], input[type=radio] { appearance: none; width: 9px; height: 9px; flex: none; border: 1px solid #777; background: #fff; display: grid; place-items: center; }
input[type=radio] { border-radius: 50%; margin-right: 1px; }
input[type=checkbox]:checked::after { content: ""; width: 4px; height: 6px; border: solid #222; border-width: 0 1px 1px 0; transform: rotate(40deg); margin-bottom: 2px; }
input[type=radio]:checked::after { content: ""; width: 5px; height: 5px; border-radius: 50%; background: #222; }
input:disabled[type=checkbox], input:disabled[type=radio] { border-color: #bbb; background: #e9e9e9; }
input:disabled[type=checkbox]:checked::after { border-color: #888; }
input:disabled[type=radio]:checked::after { background: #888; }
.row input[type=text] { width: 100%; height: 15px; border: 1px solid #b9b9b9; background: #fff; padding-left: 1px; }
.row input[type=text]:disabled { background: #efefef; border-color: #ddd; color: #777; }
.depth { grid-template-columns: 187px 71px 68px; }
.many { margin-top: 2px; align-items: start; height: 36px; }
.many > div { display: flex; flex-direction: column; gap: 3px; padding-top: 3px; }
fieldset { border: 1px solid #dcdcdc; margin: 0; padding: 0 5px; min-width: 0; }
legend { padding: 0 3px; margin: 0; line-height: 12px; }
.seq { width: 221px; height: 31px; display: grid; grid-template-columns: 101px 1fr; margin-top: 2px; }
.pair { height: 34px; grid-template-columns: 175px 174px; column-gap: 4px; align-items: start; }
.dir, .met { height: 31px; display: grid; grid-template-columns: 81px 1fr; padding-left: 5px; }
.met { grid-template-columns: 87px 1fr; }
.dir legend, .met legend { padding-left: 0; }
.seq .ck, .dir .ck, .met .ck { align-self: center; }
.road-row, .step { height: 19px; }
.zero { height: 20px; }
.road-row { grid-template-columns: 100px 71px 54px 11px 63px 54px; }
.road-row > :nth-child(4) { grid-column: 5; } .road-row > :nth-child(5) { grid-column: 6; }
.zero { grid-template-columns: 117px 54px 5px 89px 54px 8px 66px 54px; }
.zero > :nth-child(3) { grid-column: 4; } .zero > :nth-child(5) { grid-column: 7; }
.turn { grid-template-columns: 71px 120px 15px 59px 20px 5px 52px; }
.turn > :nth-child(3) { grid-column: 4; } .turn > :nth-child(5) { grid-column: 7; }
.dialog select { appearance: none; width: 100%; text-align: left; padding: 0 2px; background: linear-gradient(45deg, transparent 50%, #444 50%) calc(100% - 6px) 6px / 3px 3px no-repeat, linear-gradient(-45deg, transparent 50%, #444 50%) calc(100% - 3px) 6px / 3px 3px no-repeat, #e6e6e6; }
.step { grid-template-columns: 110px 41px 4px 97px 40px 21px 73px 41px; }
.step > :nth-child(3) { grid-column: 4; } .step > :nth-child(5) { grid-column: 7; }
.lay { grid-template-columns: 64px 107px 4px 33px 4px 1fr; }
.lay > :nth-child(3) { grid-column: 4; } .lay > :nth-child(4) { grid-column: 6; }
.bench { grid-template-columns: 77px 20px 5px 52px; }
.bench > :nth-child(3) { grid-column: 4; }
.sw { height: 11px; margin-bottom: 5px; } .brown { background: #7d5c0e; } .green { background: #2b8d0e; }
.acts { grid-template-columns: repeat(5, 66px); column-gap: 5px; padding-top: 5px; }

.cmd { height: 69px; border-top: 1px solid #555; display: grid; grid-template: 53px 16px / 15px 1fr; background: #c6c6c6; color: #333; font: 8px/10px "DejaVu Sans Mono", monospace; }
.side { grid-row: 1 / 3; background: linear-gradient(#888, #3c3c3c); }
.side svg { width: 14px; height: 40px; }
.log { padding: 2px 0 0 1px; }
.log p { margin: 0; }
.entry { background: #fdfdfd; border-top: 1px solid #999; display: flex; align-items: center; gap: 4px; padding-left: 4px; }
.prompt { background: #ccc; font-style: normal; padding: 0 1px; line-height: 9px; font-size: 7px; }
.down.g { border-top-color: #777; border-width: 2px; border-bottom: 0; }
.entry input { font-style: italic; flex: 1; }
.entry input::placeholder { color: #888; }
.status { height: 20px; background: #363636; display: flex; align-items: flex-start; padding-left: 9px; }
.tab { height: 13px; padding: 0 8px; margin-right: 2px; background: #4b4b4b; color: #aaa; border-radius: 0 0 8px 8px; line-height: 13px; }
.tab.on { background: #777; color: #fff; font-weight: bold; }
.tab.add { height: 11px; line-height: 10px; padding: 0 5px; font-weight: bold; }
.sbar { width: calc(100% - 385px); margin-left: auto; height: 20px; background: #474747; border: 1px solid #777; border-width: 1px 0 1px 1px; display: flex; align-items: center; }
.coord { width: 142px; padding-left: 8px; color: #aaa; white-space: nowrap; font-size: 8px; flex: none; }
.model { width: 40px; height: 18px; border: solid #777; border-width: 0 1px; font-size: 8px; font-weight: 600; color: #fff; }
.sicons { flex: 1; display: flex; align-items: center; justify-content: space-between; padding: 0 1px; }
.sicons svg { width: 14px; height: 14px; flex: none; }
.sicons span { font-size: 8px; font-weight: 600; color: #e4e4e4; white-space: nowrap; }
.vs { width: 1px; height: 18px; background: #777; }
</style>
